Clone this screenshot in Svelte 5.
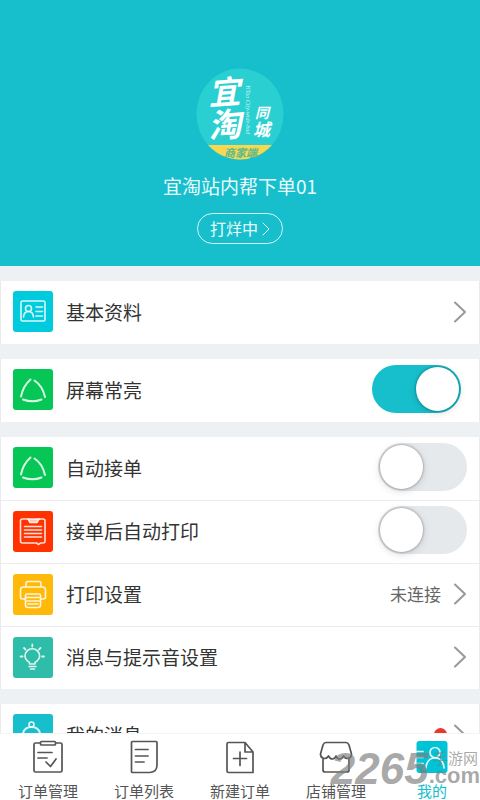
<script lang="ts">
  type IconName = "card" | "cycle" | "order" | "printer" | "bulb" | "bell";

  interface Row {
    id: string;
    label: string;
    icon: IconName;
    color: string;
    toggle?: boolean;
    value?: string;
    dot?: boolean;
    inset?: boolean;
  }

  const groups: Row[][] = [
    [{ id: "profile", label: "基本资料", icon: "card", color: "#00cbdc" }],
    [
      {
        id: "awake",
        label: "屏幕常亮",
        icon: "cycle",
        color: "#06c755",
        toggle: true,
        inset: true,
      },
    ],
    [
      { id: "accept", label: "自动接单", icon: "cycle", color: "#06c755", toggle: true },
      { id: "autoprint", label: "接单后自动打印", icon: "order", color: "#ff3200", toggle: true },
      { id: "print", label: "打印设置", icon: "printer", color: "#ffb90a", value: "未连接" },
      { id: "sound", label: "消息与提示音设置", icon: "bulb", color: "#2dbda8" },
    ],
    [{ id: "messages", label: "我的消息", icon: "bell", color: "#17bfcd", dot: true }],
  ];

  const tabs = [
    { id: "manage", label: "订单管理" },
    { id: "list", label: "订单列表" },
    { id: "create", label: "新建订单" },
    { id: "shop", label: "店铺管理" },
    { id: "mine", label: "我的" },
  ];

  let switches: Record<string, boolean> = $state({
    awake: true,
    accept: false,
    autoprint: false,
  });
  let active = $state("mine");
</script>

{#snippet rowIcon(name: IconName)}
  <svg viewBox="0 0 40 41" aria-hidden="true">
    {#if name === "card"}
      <rect x="8" y="10" width="24" height="20" rx="1.5" />
      <circle cx="15.5" cy="17.5" r="3" />
      <path d="M10.5 26c.3-3.500 2-5.500 5-5.500s4.700 2 5 5.500M23 16h6.500M23 20.500h6.500M23 25h6.500" />
    {:else if name === "cycle"}
      <path d="M17.500 10.500C13 14.500 9.500 20 8 27.500M21.500 11.500C26 14.500 30.500 21 32 28M10 30.500c6 2.300 13 2.300 18.500 0" stroke-width="2" />
    {:else if name === "order"}
      <path d="M15 8H9.500Q7.500 8 7.500 10v20q0 2 2 2h14l2 1.500 2-1.500h2.500q2 0 2-2V10q0-2-2-2H26" />
      <path d="M15 8h11l-2 3.500h-7z" fill="#fff" fill-opacity=".7" />
      <path d="M11.500 15.500h17M11.500 19h17M11.500 22.500h17M11.500 26h17" />
    {:else if name === "printer"}
      <path d="M13 13V9.500Q13 7.500 15 7.500h11q2 0 2 2V13M12 25H9.500q-2 0-2-2v-7q0-3 3-3h19q3 0 3 3v7q0 2-2 2H28" />
      <path d="M14 20h12q1.500 0 1.500 1.500V31q0 2.500-2.500 2.500H15q-2.500 0-2.500-2.500v-9.500Q12.500 20 14 20zM14 23.500h12M14 27h12M15 30h10" />
    {:else if name === "bulb"}
      <path d="M16.500 27v-1.500C13.500 23.500 12 22 12 19a7.300 7.300 0 0 1 14.600 0c0 3-1.600 4.500-4.600 6.500V27zM16 29.500h7M17.500 32h4" />
      <path d="M19.300 7.500v2M11 11l1.500 1.500M27.500 11 26 12.500M7.500 19.500h2M29 19.500h2" stroke-width="1.800" />
    {:else}
      <circle cx="18.500" cy="10.500" r="2.500" />
      <path d="M9.500 22C10 16 13.500 13 18.500 13S27 16 27.500 22v7h-18zM7 30h23M15.500 33h6" stroke-width="2" />
    {/if}
  </svg>
{/snippet}

{#snippet tabIcon(id: string)}
  <svg viewBox="0 0 34 34" aria-hidden="true">
    {#if id === "manage"}
      <path d="M9 3H4.500Q3 3 3 4.500v26Q3 32 4.500 32h25Q31 32 31 30.500v-26Q31 3 29.500 3H25" />
      <rect x="9.500" y="1.500" width="15" height="3.500" rx="1" />
      <path d="M7 12.500h14M7 18h9M15 22l4.500 4.500L25 19" />
    {:else if id === "list"}
      <path d="M5.500 1.500h23.500a1 1 0 0 1 1 1V25q0 7-7 7.500H5.500a1 1 0 0 1-1-1v-29a1 1 0 0 1 1-1zM8.500 9.500H21M8.500 16H21M8.500 22H17" />
    {:else if id === "create"}
      <path d="M5.500 2.500H22L30 12v20.500H5.500q-1.500 0-1.500-1.500V4q0-1.500 1.500-1.500zM22 2.500V12h8M10.500 18.500h13M17 12v13.500" />
    {:else if id === "shop"}
      <path d="M7 2.500h20Q29 2.500 30 5l2.500 9c0 5-5.500 6-8 2-2 4-6 4-7.500 0-1.500 4-5.500 4-7.500 0-2.500 4-8 3-8-2L4 5q1-2.500 3-2.500zM4 19v11q0 2 2 2h22q2 0 2-2V19" />
    {:else}
      <rect class="fill" x="1.500" y="1" width="31" height="32" rx="3" />
      <g class="light">
        <circle cx="20" cy="12.500" r="5" />
        <path d="M11 28c.5-6.500 3.500-10 9-10s8.500 3.500 9 10M1.500 11.500h6.500M1.500 17.500h6.500M1.500 23.500h6.500" />
      </g>
    {/if}
  </svg>
{/snippet}

{#snippet chevron()}
  <svg class="chevron" viewBox="0 0 14 22" aria-hidden="true">
    <path d="M2 1.500 12 11 2 20.500" />
  </svg>
{/snippet}

<div class="page">
  <main>
    <header>
      <svg class="avatar" viewBox="0 0 88 92" role="img" aria-label="宜淘同城商家端">
        <defs>
          <clipPath id="avatar-clip"><ellipse cx="44" cy="46" rx="43.500" ry="45.500" /></clipPath>
        </defs>
        <g clip-path="url(#avatar-clip)">
          <rect width="88" height="92" fill="#2ad0d1" />
          <rect y="77" width="88" height="15" fill="#f8d850" />
        </g>
        <g class="brush">
          <text x="12" y="36" font-size="32" transform="rotate(-4 28 24)">宜</text>
          <text x="12" y="69" font-size="33" transform="rotate(-4 28 56)">淘</text>
          <text x="59" y="50" font-size="14">同</text>
          <text x="57" y="68" font-size="17">城</text>
        </g>
        <text class="latin" x="0" y="0" transform="translate(50 17) rotate(90)">YiTao City-wide-bud</text>
        <text class="edition" x="28" y="89">商家端</text>
      </svg>
      <h1>宜淘站内帮下单01</h1>
      <button class="status" type="button">
        打烊中
        <svg viewBox="0 0 8 14" aria-hidden="true"><path d="m1 1 6 6-6 6" /></svg>
      </button>
    </header>

    {#each groups as group}
      <section>
        {#each group as row (row.id)}
          {#if row.toggle}
            <label class="row" class:inset={row.inset}>
              <span class="tile" style:background={row.color}>{@render rowIcon(row.icon)}</span>
              <span class="name">{row.label}</span>
              <input type="checkbox" role="switch" bind:checked={switches[row.id]} />
            </label>
          {:else}
            <button class="row" type="button">
              <span class="tile" style:background={row.color}>{@render rowIcon(row.icon)}</span>
              <span class="name">{row.label}</span>
              {#if row.value}<span class="value">{row.value}</span>{/if}
              {#if row.dot}<span class="dot"></span>{/if}
              {@render chevron()}
            </button>
          {/if}
        {/each}
      </section>
    {/each}
  </main>

  <nav>
    {#each tabs as tab (tab.id)}
      <button
        type="button"
        class:active={active === tab.id}
        aria-current={active === tab.id ? "page" : undefined}
        onclick={() => (active = tab.id)}
      >
        {@render tabIcon(tab.id)}
        <span>{tab.label}</span>
      </button>
    {/each}
  </nav>

  <div class="watermark">
    <span class="digits">2265</span>
    <span class="side">
      <span class="site">手游网</span>
      <span class="com">.com</span>
    </span>
  </div>
</div>

<style>
  :global(body) {
    margin: 0;
  }

  .page {
    --teal: #17bfcd;
    --gap: #edf1f4;
    --line: #e9ebed;
    position: relative;
    display: flex;
    flex-direction: column;
    height: 100vh;
    background: var(--gap);
    color: #333;
    font-family: "Noto Sans CJK SC", sans-serif;
  }

  button {
    margin: 0;
    padding: 0;
    border: 0;
    background: none;
    color: inherit;
    font: inherit;
    cursor: pointer;
  }

  svg {
    fill: none;
    stroke-linecap: round;
    stroke-linejoin: round;
  }

  main {
    flex: 1;
    min-height: 0;
    overflow-y: auto;
    scrollbar-width: none;
  }

  header {
    display: flex;
    flex-direction: column;
    align-items: center;
    padding: 68px 16px 22px;
    background: var(--teal);
    color: #e9fdfe;
  }

  .avatar {
    width: 88px;
    height: 92px;
  }
  .brush {
    fill: #fff;
    font-weight: 700;
    font-style: italic;
  }
  .latin {
    fill: #d9f8f8;
    font-family: "Liberation Serif", serif;
    font-size: 6px;
    font-style: italic;
  }
  .edition {
    fill: #58b98d;
    font-size: 11px;
    font-weight: 700;
    font-style: italic;
  }

  h1 {
    margin: 12px 0 13px;
    font-size: 19px;
    font-weight: 400;
    line-height: 28px;
  }

  .status {
    display: flex;
    align-items: center;
    gap: 4px;
    padding: 0 12px;
    border: 1px solid #d5f6f8;
    border-radius: 16px;
    font-size: 16px;
    line-height: 29px;
  }
  .status svg {
    width: 8px;
    height: 14px;
    stroke: currentColor;
  }

  section {
    margin-top: 15px;
    border: solid var(--line);
    border-width: 0 1px;
    background: #fff;
  }

  .row {
    display: flex;
    align-items: center;
    box-sizing: border-box;
    width: 100%;
    min-height: 63px;
    padding: 0 12px 2px;
    text-align: left;
    cursor: pointer;
  }
  .row + .row {
    border-top: 1px solid var(--line);
  }
  .row.inset {
    padding-right: 18px;
  }

  .tile {
    display: flex;
    margin-right: 13px;
    border-radius: 3px;
  }
  .tile svg {
    width: 40px;
    height: 41px;
    stroke: #fff;
    stroke-opacity: 0.85;
    stroke-width: 1.6;
  }

  .name {
    flex: 1;
    font-size: 19px;
    line-height: 28px;
  }

  .value {
    margin-right: 12px;
    color: #666;
    font-size: 17px;
    line-height: 28px;
  }

  .dot {
    width: 13px;
    height: 13px;
    margin-right: 6px;
    border-radius: 50%;
    background: #e8392f;
  }

  .chevron {
    width: 14px;
    height: 22px;
    stroke: #999;
    stroke-width: 2;
  }

  input {
    appearance: none;
    width: 89px;
    height: 48px;
    margin: 0 0 2px;
    padding: 2px;
    box-sizing: border-box;
    border-radius: 24px;
    background: #e5e9ec;
    cursor: pointer;
  }
  input::before {
    content: "";
    display: block;
    width: 43px;
    height: 44px;
    border-radius: 50%;
    background: #fff;
    box-shadow:
      0 0 2px 1px rgba(0, 0, 0, 0.2),
      0 2px 8px rgba(0, 0, 0, 0.14);
  }
  input:checked {
    background: var(--teal);
  }
  input:checked::before {
    margin-left: auto;
  }

  nav {
    display: flex;
    border-top: 1px solid #f3f4f5;
    background: #fff;
  }
  nav button {
    display: flex;
    flex: 1;
    flex-direction: column;
    align-items: center;
    gap: 8px;
    padding-top: 6px;
    color: #555;
    font-size: 15px;
    line-height: 18px;
  }
  nav svg {
    width: 34px;
    height: 34px;
    stroke: currentColor;
    stroke-width: 1.7;
  }
  nav .active {
    color: #12c0ce;
  }
  .fill {
    fill: #00c3d5;
    stroke: none;
  }
  .light {
    stroke: #e4fbfc;
  }

  .watermark {
    position: absolute;
    right: 0;
    bottom: 15px;
    display: flex;
    align-items: flex-end;
    color: rgba(125, 125, 125, 0.66);
    font-family: "Liberation Sans", "Noto Sans CJK SC", sans-serif;
    pointer-events: none;
  }
  .digits {
    font-size: 44px;
    font-style: italic;
    font-weight: 700;
    line-height: 32px;
  }
  .side {
    display: flex;
    flex-direction: column;
    align-items: flex-end;
  }
  .site {
    margin-right: 2px;
    font-size: 15px;
    line-height: 16px;
  }
  .com {
    font-size: 22px;
    font-weight: 700;
    line-height: 18px;
  }
</style>
